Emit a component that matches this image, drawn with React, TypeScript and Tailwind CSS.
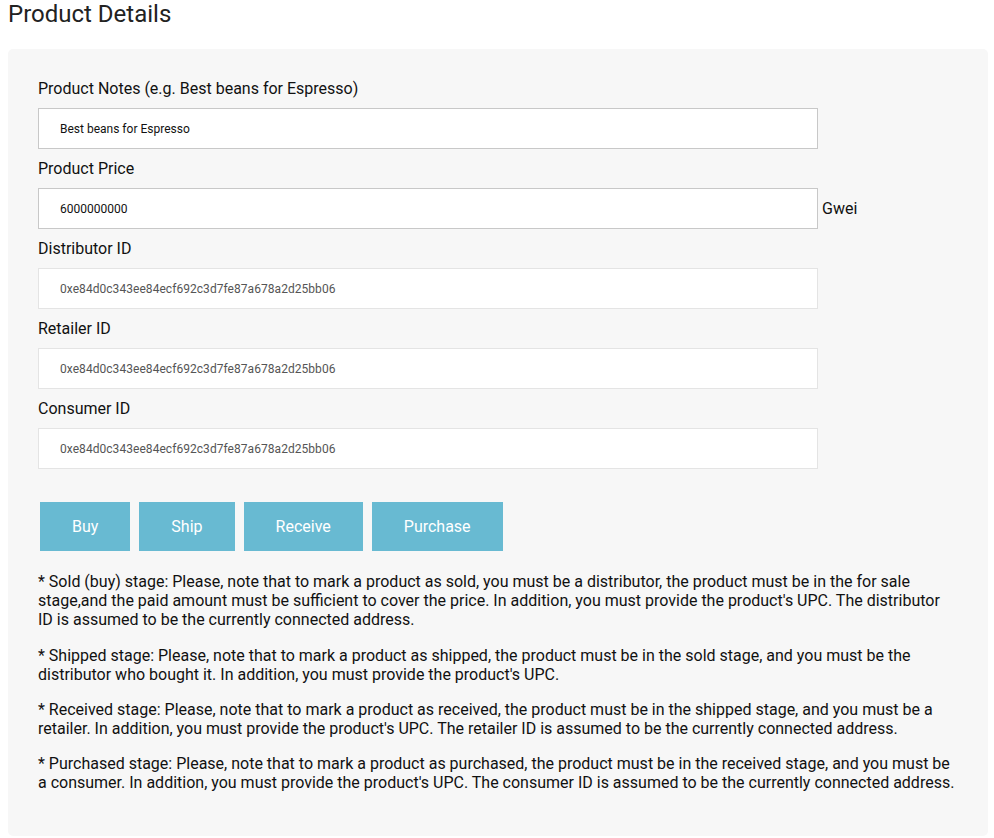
import React from "react";

const ADDR = "0xe84d0c343ee84ecf692c3d7fe87a678a2d25bb06";

function Field({ label, value, disabled, suffix }: { label: string; value: string; disabled?: boolean; suffix?: string }) {
  return (
    <div className="mb-[10px]">
      <div className="text-[16px] leading-[19px] mb-[10px] text-[#111]">{label}</div>
      <div className="flex items-center">
        <input
          readOnly
          value={value}
          className={
            "w-[780px] h-[41px] bg-white pl-[21px] text-[12px] outline-none border " +
            (disabled ? "border-[#e4e4e4] text-[#555] tracking-[0.05px]" : "border-[#c8c8c8] text-[#111]")
          }
          style={{ fontFamily: "Roboto, sans-serif" }}
        />
        {suffix && <span className="ml-[4px] text-[16px] text-[#111]">{suffix}</span>}
      </div>
    </div>
  );
}

export default function App() {
  const notes = [
    "* Sold (buy) stage: Please, note that to mark a product as sold, you must be a distributor, the product must be in the for sale stage,and the paid amount must be sufficient to cover the price. In addition, you must provide the product's UPC. The distributor ID is assumed to be the currently connected address.",
    "* Shipped stage: Please, note that to mark a product as shipped, the product must be in the sold stage, and you must be the distributor who bought it. In addition, you must provide the product's UPC.",
    "* Received stage: Please, note that to mark a product as received, the product must be in the shipped stage, and you must be a retailer. In addition, you must provide the product's UPC. The retailer ID is assumed to be the currently connected address.",
    "* Purchased stage: Please, note that to mark a product as purchased, the product must be in the received stage, and you must be a consumer. In addition, you must provide the product's UPC. The consumer ID is assumed to be the currently connected address.",
  ];
  return (
    <div className="bg-white min-h-[838px] px-2 text-[#111]" style={{ fontFamily: "Roboto, 'Liberation Sans', sans-serif" }}>
      <h2 className="text-[24px] leading-[28px] text-[#222] mb-[21px]">Product Details</h2>
      <div className="w-[980px] bg-[#f7f7f7] rounded-[5px] pt-[30px] pl-[30px] pr-[30px] pb-[28px]">
        <Field label="Product Notes (e.g. Best beans for Espresso)" value="Best beans for Espresso" />
        <Field label="Product Price" value="6000000000" suffix="Gwei" />
        <Field label="Distributor ID" value={ADDR} disabled />
        <Field label="Retailer ID" value={ADDR} disabled />
        <Field label="Consumer ID" value={ADDR} disabled />
        <div className="flex gap-[9px] ml-[2px] mt-[33px]">
          {["Buy", "Ship", "Receive", "Purchase"].map((b) => (
            <button key={b} className="h-[49px] px-[32px] bg-[#68bad2] text-white text-[16px]">
              {b}
            </button>
          ))}
        </div>
        <div className="mt-[21px]">
          {notes.map((n, i) => (
            <p key={i} className={"text-[16px] leading-[19px] text-[#111] " + (i === 0 ? "mb-[17px]" : "mb-[16px]")}>
              {n}
            </p>
          ))}
        </div>
      </div>
    </div>
  );
}
